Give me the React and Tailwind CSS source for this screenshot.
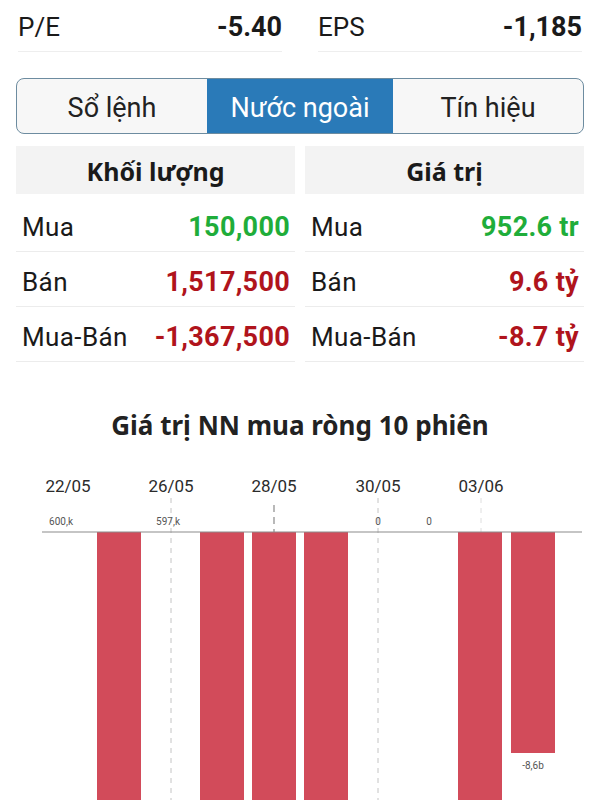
const bars = [
  { x: 97, w: 44, h: 400 },
  { x: 200, w: 44, h: 400 },
  { x: 252, w: 44, h: 400 },
  { x: 304, w: 44, h: 400 },
  { x: 458, w: 44, h: 400 },
  { x: 511, w: 44, h: 221 },
];

const dates = [
  { x: 68, t: "22/05" },
  { x: 171, t: "26/05" },
  { x: 274, t: "28/05" },
  { x: 378, t: "30/05" },
  { x: 481, t: "03/06" },
];

const Row = ({ label, value, color }) => (
  <div className="flex items-center justify-between h-[55px] border-b border-[#ececec] pt-[7px] pl-[6px] pr-[5px]">
    <span className="text-[26px] text-[#1a1a1a] tracking-[0.4px]">{label}</span>
    <span className={`text-[27px] font-bold tracking-[0.3px] ${color}`}>{value}</span>
  </div>
);

const Chart = () => {
  // y = 0 in the svg is the top of the chart box, zero line at 71
  return (
    <svg width="600" height="340" className="block">
      {dates.map((d) => (
        <text
          key={d.t}
          x={d.x}
          y="31"
          textAnchor="middle"
          fontSize="17"
          fill="#2b2b2b"
          fontFamily="Roboto, sans-serif"
        >
          {d.t}
        </text>
      ))}
      {[171, 378].map((x) => (
        <line key={x} x1={x} y1="37" x2={x} y2="340" stroke="#c4c4c4" strokeDasharray="5 5" />
      ))}
      <line x1="274" y1="44" x2="274" y2="71" stroke="#8a8a8a" strokeWidth="1.2" strokeDasharray="7 5" />
      <line x1="481" y1="37" x2="481" y2="71" stroke="#dedede" strokeDasharray="5 5" />
      <text x="61" y="64" textAnchor="middle" fontSize="10" fill="#555" fontFamily="Roboto, sans-serif">600,k</text>
      <text x="168" y="64" textAnchor="middle" fontSize="10" fill="#555" fontFamily="Roboto, sans-serif">597,k</text>
      <text x="378" y="64" textAnchor="middle" fontSize="10" fill="#555" fontFamily="Roboto, sans-serif">0</text>
      <text x="429" y="64" textAnchor="middle" fontSize="10" fill="#555" fontFamily="Roboto, sans-serif">0</text>
      {bars.map((b) => (
        <rect key={b.x} x={b.x} y="71" width={b.w} height={b.h} fill="#d24b5a" />
      ))}
      <line x1="42" y1="71" x2="582" y2="71" stroke="#8c8c8c" strokeWidth="1.2" />
      <text x="533" y="308" textAnchor="middle" fontSize="10" fill="#555" fontFamily="Roboto, sans-serif">-8,6b</text>
    </svg>
  );
};

export default function App() {
  return (
    <div className="w-[600px] h-[800px] overflow-hidden bg-white font-['Roboto',sans-serif] text-[#1a1a1a]">
      {/* P/E, EPS */}
      <div className="grid grid-cols-2 gap-x-9 px-[18px]">
        <div className="flex items-center justify-between h-[52px] border-b border-[#eeeeee] pt-[4px]">
          <span className="text-[26px]">P/E</span>
          <span className="text-[27px] font-bold">-5.40</span>
        </div>
        <div className="flex items-center justify-between h-[52px] border-b border-[#eeeeee] pt-[4px]">
          <span className="text-[26px]">EPS</span>
          <span className="text-[27px] font-bold">-1,185</span>
        </div>
      </div>

      {/* tabs */}
      <div className="mx-4 mt-[26px] flex h-[56px] rounded-lg border-[1.5px] border-[#6d8ca0] overflow-hidden bg-[#f7f7f7]">
        <div className="flex-1 flex items-center justify-center pt-[4px] text-[27px] text-[#222]">Sổ lệnh</div>
        <div className="w-[186px] flex items-center justify-center pt-[4px] text-[27px] bg-[#2a7ab8] text-white">Nước ngoài</div>
        <div className="flex-1 flex items-center justify-center pt-[4px] text-[27px] text-[#222]">Tín hiệu</div>
      </div>

      {/* foreign trade table */}
      <div className="mx-4 mt-[12px] grid grid-cols-[279px_1fr] gap-x-[10px]">
        <div>
          <div className="h-[48px] bg-[#f3f3f3] flex items-center justify-center pt-[3px] text-[25px] font-bold font-['Noto_Sans',sans-serif]">
            Khối lượng
          </div>
          <div className="h-[3px]" />
          <Row label="Mua" value="150,000" color="text-[#1fad3a]" />
          <Row label="Bán" value="1,517,500" color="text-[#b0141c]" />
          <Row label="Mua-Bán" value="-1,367,500" color="text-[#b0141c]" />
        </div>
        <div>
          <div className="h-[48px] bg-[#f3f3f3] flex items-center justify-center pt-[3px] text-[25px] font-bold font-['Noto_Sans',sans-serif]">
            Giá trị
          </div>
          <div className="h-[3px]" />
          <Row label="Mua" value="952.6 tr" color="text-[#1fad3a]" />
          <Row label="Bán" value="9.6 tỷ" color="text-[#b0141c]" />
          <Row label="Mua-Bán" value="-8.7 tỷ" color="text-[#b0141c]" />
        </div>
      </div>

      {/* chart */}
      <h2 className="mt-[47px] text-center text-[26px] font-bold font-['Noto_Sans',sans-serif] leading-[32px] text-[#222]">
        Giá trị NN mua ròng 10 phiên
      </h2>
      <div className="mt-[20px]">
        <Chart />
      </div>
    </div>
  );
}
